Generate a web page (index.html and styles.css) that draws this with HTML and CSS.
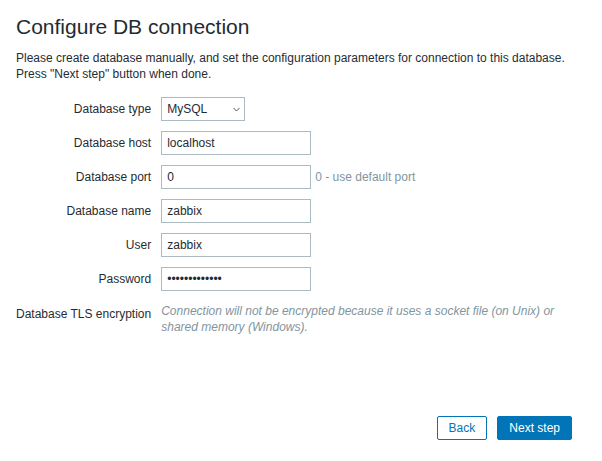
FILE: index.html
```html
<!DOCTYPE html>
<html lang="en">
<head>
<meta charset="utf-8">
<title>Configure DB connection</title>
<link rel="stylesheet" href="styles.css">
</head>
<body>
<div class="page">
  <h1 class="title">Configure DB connection</h1>
  <p class="intro">Please create database manually, and set the configuration parameters for connection to this database. Press "Next step" button when done.</p>
  <div class="form">
    <label class="label">Database type</label>
    <div class="field">
      <div class="select">
        <span>MySQL</span>
        <svg class="chev" width="7" height="5" viewBox="0 0 7 5"><path d="M0.5 1 L3.5 4 L6.5 1" fill="none" stroke="#4a555b" stroke-width="1"/></svg>
      </div>
    </div>

    <label class="label">Database host</label>
    <div class="field"><input class="input" type="text" value="localhost"></div>

    <label class="label">Database port</label>
    <div class="field"><input class="input" type="text" value="0"><span class="hint">0 - use default port</span></div>

    <label class="label">Database name</label>
    <div class="field"><input class="input" type="text" value="zabbix"></div>

    <label class="label">User</label>
    <div class="field"><input class="input" type="text" value="zabbix"></div>

    <label class="label">Password</label>
    <div class="field"><input class="input" type="password" value="zabbixpasswor"></div>

    <label class="label label-tls">Database TLS encryption</label>
    <div class="note">Connection will not be encrypted because it uses a socket file (on Unix) or shared memory (Windows).</div>
  </div>
  <div class="footer">
    <button class="btn btn-alt" type="button">Back</button>
    <button class="btn btn-main" type="button">Next step</button>
  </div>
</div>
</body>
</html>
```

FILE: styles.css
```css
* { box-sizing: border-box; }
html, body { margin: 0; padding: 0; background: #ffffff; }
body {
  font-family: Arial, "Liberation Sans", sans-serif;
  font-size: 12px;
  line-height: 16px;
  color: #1f2c33;
}
.page {
  min-height: 461px;
  display: flex;
  flex-direction: column;
  padding: 15px 30px 21px 16px;
}
.title {
  margin: 0;
  font-size: 21px;
  font-weight: normal;
  line-height: 24px;
}
.intro {
  margin: 11px 0 0;
}
.form {
  margin-top: 15px;
  display: grid;
  grid-template-columns: max-content 1fr;
  column-gap: 10px;
  row-gap: 10px;
}
.label {
  text-align: right;
  line-height: 24px;
}
.label-tls { line-height: 16px; padding-top: 5px; }
.field {
  display: flex;
  align-items: center;
  height: 24px;
}
.select {
  width: 84px;
  height: 24px;
  border: 1px solid #acbbc2;
  display: flex;
  align-items: center;
  justify-content: space-between;
  padding: 0 4px 0 5px;
  background: #fff;
}
.chev { display: block; }
.input {
  width: 150px;
  height: 24px;
  border: 1px solid #acbbc2;
  padding: 0 5px;
  font-family: Arial, "Liberation Sans", sans-serif;
  font-size: 12px;
  color: #1f2c33;
  background: #fff;
  outline: none;
  margin: 0;
}
.hint {
  margin-left: 4px;
  color: #8295a0;
}
.note {
  margin-top: 2px;
  font-style: italic;
  color: #8295a0;
}
.footer {
  margin-top: auto;
  display: flex;
  justify-content: flex-end;
  gap: 10px;
}
.btn {
  height: 24px;
  padding: 0 11px;
  font-family: Arial, "Liberation Sans", sans-serif;
  font-size: 12px;
  border-radius: 2px;
  border: 1px solid #0275b8;
  cursor: pointer;
}
.btn-alt { background: #fff; color: #0275b8; }
.btn-main { background: #0275b8; color: #fff; }
```
